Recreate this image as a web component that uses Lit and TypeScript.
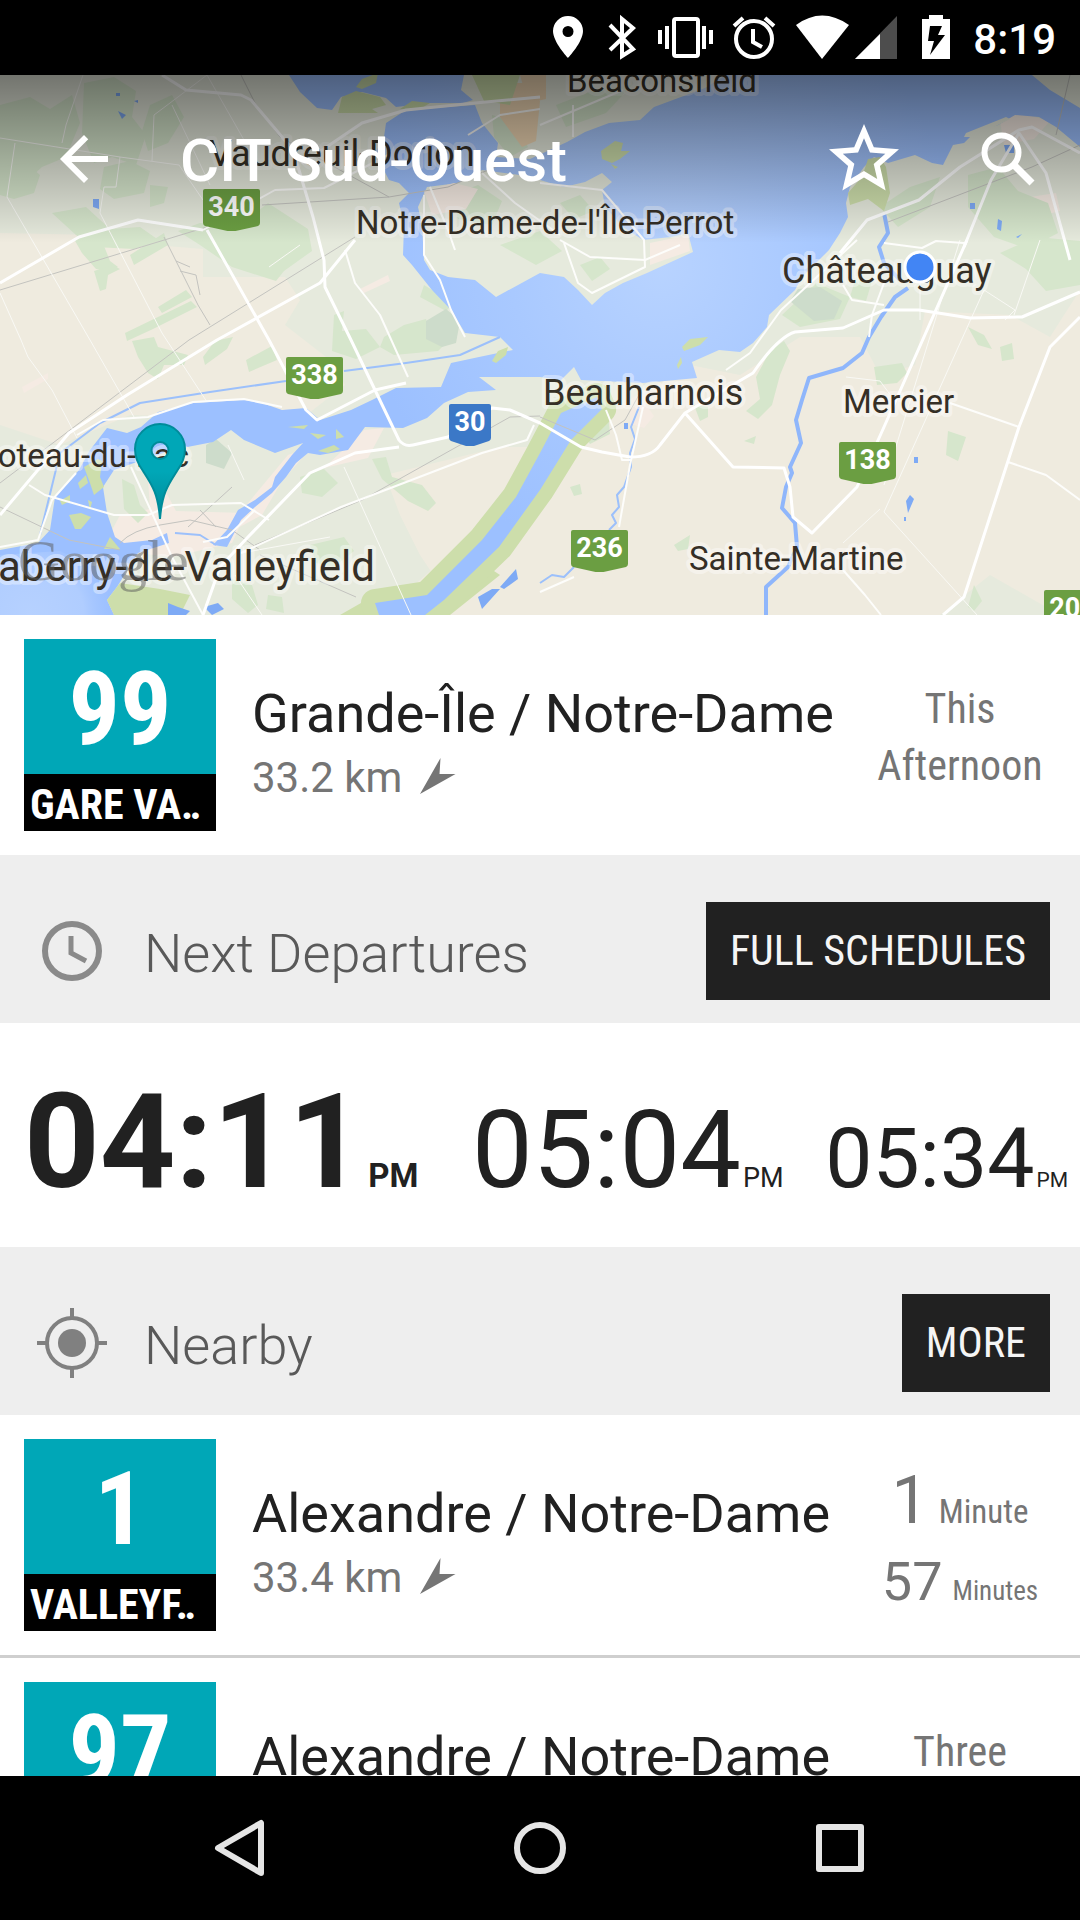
import { LitElement, html, css, svg } from "lit";
import { customElement, property } from "lit/decorators.js";

interface Shield {
  x: number;
  y: number;
  label: string;
  blue?: boolean;
}

interface Place {
  x: number;
  y: number;
  size: number;
  name: string;
  anchor?: string;
}

interface Wait {
  value: string;
  unit: string;
}

interface Stop {
  route: string;
  headsign: string;
  name: string;
  distance: string;
  words?: string[];
  waits?: Wait[];
}

const SHIELDS: Shield[] = [
  { x: 203, y: 114, label: "340" },
  { x: 286, y: 282, label: "338" },
  { x: 449, y: 329, label: "30", blue: true },
  { x: 839, y: 367, label: "138" },
  { x: 571, y: 455, label: "236" },
  { x: 1044, y: 515, label: "201" },
];

const PLACES: Place[] = [
  { x: 567, y: 17, size: 33, name: "Beaconsfield" },
  { x: 209, y: 91, size: 36, name: "Vaudreuil-Dorion" },
  { x: 356, y: 159, size: 33, name: "Notre-Dame-de-l'Île-Perrot" },
  { x: 782, y: 208, size: 36, name: "Châteauguay" },
  { x: 543, y: 330, size: 36, name: "Beauharnois" },
  { x: 843, y: 338, size: 33, name: "Mercier" },
  { x: 689, y: 495, size: 33, name: "Sainte-Martine" },
  { x: 189, y: 392, size: 33, name: "Coteau-du-Lac", anchor: "end" },
  { x: 375, y: 506, size: 42, name: "Salaberry-de-Valleyfield", anchor: "end" },
];

/* Woods, drawn as loose angular patches. */
const WOODS = [
  "M0 30l30-8 20 12 22-14 8 28-14 34-24 10-20 18-22-6z",
  "M84 8l30-6 22 14-4 26 14 18-10 30-24-8-18 6-12-30z",
  "M150 30l22-10 12 22-16 26-20 8-6-20z",
  "M0 92l26-4 14 12-6 18-20 6-14-4z",
  "M52 138l34-6 24 22 30-2 20 14-26 8-40-2-18-12z",
  "M104 92l26-6 20 10-6 22-30 6-14-10zM150 110l18 2-4 16-14 4z",
  "M130 180l34-22 4 12-34 20zM74 164l24-8 12 30 8 6-8 4-14-2-14-16z",
  "M94 196l18-6 8 4-12 6-2 14-6 2z",
  "M178 156l22-8 38 4 30-24 40 26 4 22-28 20-8 10-44-14-32-22z",
  "M158 232l28-17 6 7-30 16zM125 258l66-32 6 6-44 22-26 12zM246 285l26-14 5 14-28 12z",
  "M203 282l12-16 18-4-6 12-22 16zM132 266l22-4 4 10 30 8-4 10-20 0-6 14-10-6-10-16z",
  "M334 240l10-4-2 20 24-2 14 18-24 12-24-8zM384 262l20-12 22-6 4 14 18 8-10 10-44 4-14-8z",
  "M122 404l12 6 6 20 8 8-10 10-14-14zM300 402l24-8 14 14-16 14-20-4z",
  "M372 384l14-2 6 20 30 8 14 18-8 8-20-10-26-22z",
  "M310 470l34-8 10 14-20 16-18-4zM232 504l20 6 6 20-10 8-16-14zM268 520l14 2 2 16-18-4z",
  "M492 40l20 6 16 26-18 10-16-20zM424 210l30 18-8 8-26-14z",
  "M556 30l36-14 40-6-26 28-40 14z",
  "M968 100l30-8 20 24 30 12 10 30-30 16-34-12-26-30z",
  "M1000 178l36-16 44 4v44l-34 6-20-22z",
  "M880 132l30-20 30-10-10 30-32 20z",
  "M782 240l34-32 34 14-10 22-40 8zM856 202l16 4-6 20-16-4z",
  "M874 292l28-4 5 10-10 10-20 2zM770 276l14-10 6 10-10 24-8 30-14 14-12-8 14-12-4-22z",
  "M948 356l18 6-8 24-12-6zM1000 272l12-4 2 16-12 2zM968 252l16 8 8 14-14-4z",
  "M674 470l16-10-2 14-10 2zM584 345l14-12 10 4 2 22-20 10-6-8z",
  "M744 366l12-5-2 8zM570 412l10-3 2 10-8 2zM974 510l8 16-8 10-6-4z",
  "M540 295l16-20 16 6-14 18zM602 178l28-8 6 22-22 10-14-8zM694 330l14 2 0 10-8 4z",
];

const BUILT = [
  "M418 118l30-14 40-6 50 10-20 22-60-2-18 30z",
  "M120 440l30-6 -2-30 8-6 20 38 70 2-14 30-60 14-70-8z",
  "M238 440l50-60 24-8-30 34-20 34-30 16z",
  "M364 355l20-2-16 30-44 10z",
  "M360 214l28-14 2 6-26 12zM22 312l26-14 0 6-24 14z",
  "M1030 122l26-4 4 18-24 6-10-12z",
  "M630 335l14-8 10 14-10 12-14-4z",
  "M1000 46l20-8 30 8-16 18-30 6z",
];

const MEADOWS = [
  "M426 246l20-12 14 12-4 22-14 4-16-8z",
  "M206 370l10-6 16 14-8 16-18-6z",
  "M790 226l8-12 22-2 22 14-8 18-20 2z",
];

const FIELDS = [
  "M500 8l24 0 16 18-4 40-14 6-22-30z",
  "M520 0h26l0 24-18 4z",
];

/* Main rivers and lakes. */
const WATER = [
  "M289 0L300 17 317 33 332 35 341 22 362 17 386 23 396 32 430 28 463 28 473 25 461 15 464 0z",
  "M406 35L475 30 482 48 498 68 496 82 530 84 567 67 585 57 609 48 640 45 654 32 681 22 705 13 726 0H1032L1050 15 1080 33V72L1056 52 1039 42 1015 40 998 50 974 58 964 68 953 70 943 90 932 88 915 80 888 88 874 82 864 92 850 112 846 128 848 142 840 158 829 175 802 202 795 215 769 240 767 252 753 268 740 277 719 275 692 287 697 303 643 308 581 305 574 292 561 305 540 302 530 302 479 302 496 315 468 317 444 328 427 343 403 353 365 352 348 375 320 380 308 378 296 388 286 402 272 418 255 432 241 445 227 472 213 470 227 455 238 435 255 425 272 412 275 402 292 380 303 368 275 378 244 365 231 355 213 367 172 375 134 388 114 395 103 412 107 438 115 462 124 468 152 465 167 458 169 468 138 478 117 512 107 525 114 540H0V475L38 468 50 455 55 422 79 395 90 375 107 353 127 358 141 352 158 337 193 328 244 325 262 328 282 335 306 333 320 345 351 335 372 325 396 313 441 312 451 288 479 282 513 275 500 262 465 258 451 235 432 215 412 190 403 180 404 150 399 128 409 118 399 108 389 105 375 78 384 62 386 48z",
  "M561 338L597 322 602 334 571 365 540 415 499 472 444 525 425 540H379L375 528 427 520 482 465 516 422 540 378z",
];

const ISLANDS = [
  "M418 132L427 112 458 108 482 95 520 100 540 105 564 112 585 107 602 98 612 107 602 115 605 132 623 152 643 165 671 162 688 158 693 177 671 187 647 198 623 208 605 218 592 230 578 215 564 202 540 198 496 222 475 205 448 202 430 195 424 185 422 150z",
];

const SMALL_ISLANDS = [
  "M601 76l14-10 8 2-2 8 9 0-10 8-8 4-10-4z",
  "M611 89l7 3-3 2z",
  "M356 12l6-8 16-6-2 10-14 6z",
  "M342 22l14-6 24 6 6 8-14 4 6 4-40 0z",
  "M400 34l12-8 18 2-10 6z",
  "M682 272l8-8 18-2-8 8-16 6z",
  "M677 290l4-8 1 6-4 6z",
  "M288 352l20-2-4 4zM310 358l16 2-8 4zM336 354l8 8-8 2zM318 376l16-6 6 4-12 4z",
  "M78 408l8-8 2 8-8 6zM69 440l12-2 10 4-10 12-6 0zM84 392l14-8 4 2-2 16 4 10-10 8-4-12z",
  "M60 426l10-6 0 6-8 4zM88 425l4 2-2 8zM104 474l6-12 10 12z",
  "M492 286l6-10 10-4-2 8-10 8z",
];

const MAIN_ROADS = [
  "M162 0L186 15 241 20 251 25 293 75 313 142 324 185 325 212 351 265 399 365Q404 372 413 370L448 362 492 333 510 335 540 348 581 372 602 377 630 382Q652 382 660 370L685 338 753 298 Q778 262 795 257L843 253 884 235 919 235 970 243 1022 242 1080 217",
  "M540 22L475 28 406 35 362 48 303 88 293 78M355 165L320 208 217 265 127 320 69 358 0 440",
  "M207 155L269 265 306 335 317 345 375 315 406 308M203 155L138 145 79 162 0 208",
  "M203 540L220 492 248 462 310 398 355 378 399 372",
  "M840 178L867 145 919 125 960 92 1019 55 1032 52 1080 78",
  "M964 172L991 105 1019 58 1046 98 1070 185",
  "M685 338L733 392 784 393 790 412 793 442 812 458 857 412 884 352 967 165",
  "M1080 242L1050 272 1019 352 964 522 943 540",
];

const SIDE_ROADS = [
  "M29 410L45 420 114 440 148 440 172 430 241 428 269 445",
  "M0 472L38 465 52 425 76 398M77 360L103 345 148 342 193 327 244 324 282 332",
  "M203 155L275 115 324 113 334 108 365 92 388 80",
  "M203 467L227 462 255 435M131 392L172 482 203 540",
  "M241 478L341 432 482 378 527 365 534 350",
  "M424 120L424 180 440 205 451 235 465 262M564 168L578 208 592 218 645 192 644 165 602 115 540 108",
  "M560 165L590 182 645 185 680 170M430 112L448 155 455 175M482 98L515 128 560 160",
  "M857 165L781 235 750 278 726 295M884 208L872 240 869 262",
  "M843 495L865 520 881 540M1019 352L950 328M1008 387L1046 400 1080 425",
  "M643 332L630 390 619 452M574 502L540 517M606 335L616 360 622 385 632 385",
  "M884 168L922 173 936 166 964 168M843 210L852 225 884 230",
  "M540 50L623 15M573 30V62M468 60L500 40 540 34",
  "M345 175L355 208 380 240 408 302",
];

const THIN_ROADS = [
  "M83 0L66 50 62 68M15 68L7 122 90 265 134 342M0 63L120 82 179 90 203 125M0 218L21 265 28 282 52 315 77 363",
  "M152 86L154 40 170 28 207 0M120 82L116 112H104L100 138 162 258 207 327M172 30L210 110M207 0L248 72",
  "M344 392L411 540M269 192L300 170M884 437L977 540M884 437L984 215M880 434L843 468",
  "M1064 540L1080 520M920 245V200M960 165L884 410M1040 165L1014 240M984 215L1015 235 1005 245",
  "M235 500L262 540M241 478L330 462M228 370L244 405M846 302L880 306 892 322",
];

const RAILS = [
  "M0 215L207 152M241 0L255 28 280 62 389 122 262 130M389 122L448 112 500 90",
  "M0 408L189 265 355 162M0 432L69 465 120 475M120 468Q132 455 160 450L190 445 232 455 260 475M255 470L362 425 510 342 540 341",
  "M188 452L232 412M200 435L216 452M164 162L178 190 198 230 210 250M180 196L196 200 200 220M176 186L190 192",
  "M540 342L595 365 625 345 640 318M888 147L1032 92 1080 70M1056 60L1070 0M260 480L356 522",
];

const CREEKS = [
  "M884 138L888 158 879 172 884 188 900 205",
  "M908 213L895 222 881 242 869 262 862 278 843 293 809 303 802 325 796 345 801 368 790 392 792 398 786 412 782 433 795 448 797 472 788 492 766 512 766 540",
];

const BROOKS = [
  "M639 332L631 352 635 364 630 378 631 392 624 412 617 420 619 432 612 440 616 448 609 455M574 492L564 502 552 500 540 508",
  "M344 296L406 288 460 280 500 262M286 306L210 317 140 328 100 348 60 378 40 460M175 458L200 460 216 470",
];

const PONDS = [
  "M93 124h6v10l-6-2zM118 36l8 4-4 4zM134 26l4-1v3zM116 18h4v3h-4z",
  "M906 426l4-6 4 4-6 14zM904 442h2v4h-2zM970 128h5v6h-5zM998 144l4 2-1 10-4-2zM1016 162l6-3-4 4z",
  "M914 382h4v6h-4zM624 348h4v6h-4zM500 512l16-18 2 10-14 10zM478 522l14-8 8 0-18 20zM168 528l10 4 12 4-4 4h-18z",
  "M204 532l14-4 6 6-12 6zM1004 70h10v8h-8z",
];

@customElement("region-map")
class RegionMap extends LitElement {
  static styles = css`
    :host {
      display: block;
    }
    .map {
      display: block;
      width: 100%;
      height: 540px;
      font-family: Roboto, "Liberation Sans", sans-serif;
    }
    .woods { fill: #d6e6cc; }
    .built { fill: #f5ebe3; }
    .meadow { fill: #cddccb; }
    .field { fill: #f0d7b4; }
    .water { fill: url(#lake); }
    .bay { fill: url(#bay); }
    .park { fill: #cddeab; }
    .land { fill: #e6eadd; }
    .bank { fill: none; stroke: #cddeab; stroke-width: 28; stroke-linejoin: round; }
    .main { fill: none; stroke: #ffffff; stroke-width: 3; stroke-linejoin: round; }
    .side { fill: none; stroke: #fdfdfb; stroke-width: 2; stroke-linejoin: round; }
    .thin { fill: none; stroke: #f9f9f5; stroke-width: 1; }
    .rail { fill: none; stroke: #c3c3bf; stroke-width: 1; }
    .creek { fill: none; stroke: #8fb6fb; stroke-width: 4; stroke-linejoin: round; }
    .brook { fill: none; stroke: #9cc0fb; stroke-width: 2; stroke-linejoin: round; }
    .pond { fill: #7eaaf5; }
    .place {
      fill: #352f26;
      stroke: rgba(255, 255, 255, 0.4);
      stroke-width: 8px;
      stroke-linejoin: round;
      paint-order: stroke;
    }
    .shield { fill: #6b9e42; }
    .shield-blue { fill: #3b78c7; }
    .shield-text { fill: #ffffff; font-size: 27px; font-weight: 700; text-anchor: middle; }
    .brand {
      fill: rgba(90, 90, 90, 0.5);
      font-family: "Liberation Serif", serif;
      font-size: 58px;
    }
    .pin { fill: url(#teal); stroke: #008c9a; stroke-width: 2; }
    .here { fill: #4285f4; stroke: #ffffff; stroke-width: 3; }
  `;

  render() {
    return html`
      <svg class="map" viewBox="0 0 1080 540" preserveAspectRatio="xMidYMid slice" role="img" aria-label="Map">
        <defs>
          <radialGradient id="lake" gradientUnits="userSpaceOnUse" cx="660" cy="190" r="300">
            <stop offset="0" stop-color="#b8d3ff" />
            <stop offset="0.5" stop-color="#a9c9ff" />
            <stop offset="1" stop-color="#9cc0ff" />
          </radialGradient>
          <radialGradient id="bay" gradientUnits="userSpaceOnUse" cx="30" cy="540" r="90">
            <stop offset="0" stop-color="#b6d1ff" />
            <stop offset="0.6" stop-color="#b0cdff" />
            <stop offset="1" stop-color="#9cc0ff" stop-opacity="0" />
          </radialGradient>
          <linearGradient id="teal" x1="0" y1="0" x2="0" y2="1">
            <stop offset="0.5" stop-color="#00a7b7" />
            <stop offset="1" stop-color="#008796" />
          </linearGradient>
        </defs>
        <rect width="1080" height="540" fill="#efebdf" />
        <path class="land" d="M0 0H1080V215L1050 262 1010 240 925 236 915 290 880 300 860 262 800 262 740 300 690 290 620 330 540 400 380 540H0V350L60 370 130 340 300 345 345 310 330 285 285 250 300 225 285 202H203V174L130 168 100 160 0 158z" />
        <path fill="#efebdf" d="M385 400L500 372 530 372 516 422 440 510 420 480 400 440zM500 480L570 380 610 390 600 540H440z" />
        <path class="land" d="M940 540L990 500 1060 540z" />
        ${BUILT.map((d) => svg`<path class="built" d=${d} />`)}
        ${WOODS.map((d) => svg`<path class="woods" d=${d} />`)}
        ${MEADOWS.map((d) => svg`<path class="meadow" d=${d} />`)}
        ${FIELDS.map((d) => svg`<path class="field" d=${d} />`)}
        <path class="park" d="M340 540L375 520 440 505 470 480 500 500 450 540zM472 0H520L510 30 484 26z" />
        <path class="bank" d=${WATER[2]} />
        ${WATER.map((d) => svg`<path class="water" d=${d} />`)}
        <path class="bay" d="M0 480L60 476 110 500 107 525 114 540H0z" />
        <path class="park" d="M107 525L120 508 160 514 190 520 180 540H114z" />
        ${ISLANDS.map((d) => svg`<path class="land" d=${d} />`)}
        <path class="woods" d="M452 120l26-10 24 16-10 24-34-6zM500 170l40-14 22 20-26 14zM580 190l20-8 10 12-18 12zM560 128l20-8 14 16-20 8z" />
        <path class="built" d="M650 168l38-8 2 16-40 14zM424 116l30-8 24 6-12 20-34 6z" />
        ${SMALL_ISLANDS.map((d) => svg`<path class="park" d=${d} />`)}
        <path class="park" d="M848 118L862 102 868 84 880 82 886 92 890 118 884 136 868 124 850 130z" />
        <path class="land" d="M966 58l40-16 4 2-36 18-10 0z" />
        ${BROOKS.map((d) => svg`<path class="brook" d=${d} />`)}
        ${CREEKS.map((d) => svg`<path class="creek" d=${d} />`)}
        ${PONDS.map((d) => svg`<path class="pond" d=${d} />`)}
        ${RAILS.map((d) => svg`<path class="rail" d=${d} />`)}
        ${THIN_ROADS.map((d) => svg`<path class="thin" d=${d} />`)}
        ${SIDE_ROADS.map((d) => svg`<path class="side" d=${d} />`)}
        ${MAIN_ROADS.map((d) => svg`<path class="main" d=${d} />`)}
        ${PLACES.map(
          (p) => svg`<text class="place" x=${p.x} y=${p.y} font-size=${p.size} text-anchor=${p.anchor ?? "start"}>${p.name}</text>`
        )}
        ${SHIELDS.map((s) => {
          const w = s.blue ? 42 : 57;
          return svg`<g transform="translate(${s.x} ${s.y})">
            <path class=${s.blue ? "shield-blue" : "shield"} d="M2 0H${w - 2}Q${w} 0 ${w} 2V34Q${w} 36 ${w - 2} 37L${w / 2 + 4} 42H${w / 2 - 4}L2 37Q0 36 0 34V2Q0 0 2 0z" />
            <text class="shield-text" x=${w / 2} y="27">${s.label}</text>
          </g>`;
        })}
        <text class="brand" x="18" y="505">Google</text>
        <path class="pin" fill-rule="evenodd" d="M160 444C158 418 152 410 143 396Q135 385 135 374A25 25 0 0 1 185 374Q185 385 177 396C168 410 162 418 160 444zM160 367A8 8 0 0 0 160 384A8 8 0 0 0 160 367z" />
        <circle class="here" cx="920" cy="192" r="15" />
      </svg>
    `;
  }
}

@customElement("stop-row")
class StopRow extends LitElement {
  @property({ attribute: false }) stop!: Stop;

  static styles = css`
    :host {
      display: block;
    }
    .row {
      display: grid;
      grid-template-columns: 192px 1fr 240px;
      column-gap: 36px;
      padding: 24px 0 24px 24px;
      min-height: 192px;
      background: #ffffff;
    }
    .badge {
      display: flex;
      flex-direction: column;
      font-family: "Roboto Condensed", Roboto, "Liberation Sans", sans-serif;
      font-weight: 700;
      color: #ffffff;
    }
    .route {
      height: 135px;
      line-height: 140px;
      background: #00a7b7;
      font-size: 102px;
      text-align: center;
    }
    .headsign {
      height: 57px;
      line-height: 62px;
      padding: 0 6px;
      background: #000000;
      font-size: 42px;
      white-space: nowrap;
      overflow: hidden;
    }
    .info {
      padding-top: 39px;
      min-width: 0;
    }
    .name {
      margin: 0;
      font-size: 54px;
      font-weight: 400;
      line-height: 72px;
      color: #212121;
      white-space: nowrap;
    }
    .distance {
      display: flex;
      align-items: center;
      gap: 18px;
      font-size: 42px;
      line-height: 56px;
      color: #757575;
    }
    .arrow {
      width: 36px;
      height: 36px;
      margin-bottom: 4px;
      fill: #757575;
    }
    .when {
      display: flex;
      flex-direction: column;
      justify-content: center;
      align-items: center;
      font-family: "Roboto Condensed", Roboto, "Liberation Sans", sans-serif;
      font-size: 42px;
      line-height: 57px;
      color: #757575;
      padding-top: 4px;
    }
    .wait {
      display: flex;
      align-items: baseline;
      font-family: Roboto, "Liberation Sans", sans-serif;
      gap: 10px;
      line-height: 80px;
    }
    .value {
      font-size: 54px;
    }
    .unit {
      font-family: "Roboto Condensed", Roboto, "Liberation Sans", sans-serif;
      font-size: 27px;
    }
    .wait:first-child {
      line-height: 60px;
    }
    .wait:first-child .value {
      font-size: 66px;
    }
    .wait:first-child .unit {
      font-size: 33px;
    }
    .timed {
      padding-top: 32px;
    }
  `;

  render() {
    const s = this.stop;
    return html`
      <article class="row">
        <div class="badge">
          <span class="route">${s.route}</span>
          <span class="headsign">${s.headsign}</span>
        </div>
        <div class="info">
          <h3 class="name">${s.name}</h3>
          <div class="distance">
            <span>${s.distance}</span>
            <svg class="arrow" viewBox="0 0 36 36" aria-hidden="true"><path d="M20.500 0L19.500 16 35.500 16 0 36z" /></svg>
          </div>
        </div>
        <div class="when ${s.waits ? "timed" : ""}">
          ${s.words?.map((w) => html`<span>${w}</span>`)}
          ${s.waits?.map(
            (w) => html`<span class="wait"><span class="value">${w.value}</span><span class="unit">${w.unit}</span></span>`
          )}
        </div>
      </article>
    `;
  }
}

const SELECTED: Stop = {
  route: "99",
  headsign: "GARE VA‥",
  name: "Grande-Île / Notre-Dame",
  distance: "33.2 km",
  words: ["This", "Afternoon"],
};

const NEARBY: Stop[] = [
  {
    route: "1",
    headsign: "VALLEYF‥",
    name: "Alexandre / Notre-Dame",
    distance: "33.4 km",
    waits: [
      { value: "1", unit: "Minute" },
      { value: "57", unit: "Minutes" },
    ],
  },
  {
    route: "97",
    headsign: "VALLEYF‥",
    name: "Alexandre / Notre-Dame",
    distance: "33.4 km",
    words: ["Three", "Hours"],
  },
];

@customElement("app-root")
class AppRoot extends LitElement {
  static styles = css`
    :host {
      display: flex;
      flex-direction: column;
      height: 100vh;
      overflow: hidden;
      background: #ffffff;
      font-family: Roboto, "Liberation Sans", sans-serif;
      color: #212121;
    }
    button {
      border: 0;
      margin: 0;
      padding: 0;
      background: none;
      font: inherit;
      color: inherit;
      cursor: pointer;
    }
    svg {
      display: block;
    }
    .status {
      flex: none;
      display: flex;
      justify-content: flex-end;
      align-items: center;
      height: 75px;
      padding-right: 24px;
      background: #000000;
      color: #ffffff;
      font-size: 42px;
      font-weight: 500;
    }
    .status svg {
      height: 75px;
      fill: #ffffff;
    }
    .status time {
      padding-top: 3px;
      margin-left: 12px;
    }
    .w51 { width: 51px; }
    .w55 { width: 55px; }
    .w57 { width: 57px; }
    .w64 { width: 64px; }
    .w66 { width: 66px; }
    .w75 { width: 75px; }
    .w52 { width: 52px; }
    .hero {
      flex: none;
      position: relative;
    }
    .toolbar {
      position: absolute;
      inset: 0 0 auto 0;
      display: flex;
      align-items: center;
      height: 168px;
      padding-left: 12px;
      background: linear-gradient(rgba(0, 0, 0, 0.5), rgba(0, 0, 0, 0));
      color: #ffffff;
    }
    .tool {
      display: grid;
      place-items: center;
      width: 144px;
      height: 144px;
    }
    .tool svg {
      width: 72px;
      height: 72px;
      fill: #ffffff;
    }
    .tool .star {
      width: 84px;
      height: 84px;
    }
    .title {
      flex: 1;
      margin: 0;
      padding: 4px 0 0 24px;
      font-size: 60px;
      font-weight: 500;
      line-height: 72px;
      white-space: nowrap;
    }
    .content {
      flex: 1;
      min-height: 0;
      overflow: hidden;
    }
    .section {
      display: flex;
      align-items: center;
      gap: 36px;
      min-height: 144px;
      padding: 24px 30px 0 36px;
      background: #eeeeee;
    }
    .section svg {
      flex: none;
      width: 72px;
      height: 72px;
    }
    .heading {
      flex: 1;
      margin: 0;
      padding-top: 6px;
      font-size: 54px;
      font-weight: 300;
      line-height: 64px;
      color: #595959;
    }
    .section .action {
      height: 98px;
      padding: 0 24px 2px;
      background: #212121;
      color: #f5f5f5;
      font-family: "Roboto Condensed", Roboto, "Liberation Sans", sans-serif;
      font-size: 42px;
      white-space: nowrap;
    }
    .times {
      display: flex;
      align-items: baseline;
      justify-content: space-between;
      height: 224px;
      padding: 0 12px 0 24px;
      line-height: 238px;
      white-space: nowrap;
    }
    .first { font-size: 132px; font-weight: 700; padding-right: 12px; }
    .second { font-size: 108px; }
    .third { font-size: 84px; }
    .pm { margin-left: 2px; }
    .first .pm { font-size: 33px; margin-left: 4px; }
    .second .pm { font-size: 27px; }
    .third .pm { font-size: 21px; }
    .divider {
      height: 3px;
      background: #cfcfcf;
    }
    .nav {
      flex: none;
      display: flex;
      justify-content: center;
      height: 144px;
      background: #000000;
    }
    .key {
      flex: 0 1 300px;
      display: grid;
      place-items: center;
    }
    .key svg {
      width: 60px;
      height: 60px;
      fill: none;
      stroke: #e5e5e5;
      stroke-width: 6;
      stroke-linejoin: round;
    }
  `;

  private statusBar() {
    return html`
      <header class="status">
        <svg class="w55" viewBox="0 0 55 75"><path fill-rule="evenodd" d="M27 16a15 15 0 0 0-15 15C12 42 27 58 27 58S42 42 42 31A15 15 0 0 0 27 16zM27 26a5 5 0 1 1 0 11 5 5 0 0 1 0-11z" /></svg>
        <svg class="w51" viewBox="0 0 51 75"><path d="M14 25L37 49 26 56V19L37 28 14 50" fill="none" stroke="#ffffff" stroke-width="4" /></svg>
        <svg class="w75" viewBox="0 0 75 75"><rect x="27" y="19" width="24" height="37" rx="2" fill="none" stroke="#ffffff" stroke-width="4" /><path d="M18 26h4v23h-4zM11 30h4v14h-4zM55 26h4v23h-4zM62 30h4v14h-4z" /></svg>
        <svg class="w64" viewBox="0 0 64 75"><circle cx="32" cy="39" r="18" fill="none" stroke="#ffffff" stroke-width="4" /><path d="M31 29v13l9 5M12 26l9-8M52 26l-9-8" fill="none" stroke="#ffffff" stroke-width="4" /></svg>
        <svg class="w66" viewBox="0 0 66 75"><path d="M10 25Q36 6 63 25L36 59z" /></svg>
        <svg class="w57" viewBox="0 0 57 75"><path d="M45 16V59H3z" fill="#4d4d4d" /><path d="M28 34V59H3z" /></svg>
        <svg class="w52" viewBox="0 0 52 75"><path fill-rule="evenodd" d="M20 15h14v4h7v40H13V19h7zM21 26L19 41h6l-4 14 15-20h-7l4-9z" /></svg>
        <time>8:19</time>
      </header>
    `;
  }

  private toolbar() {
    return html`
      <div class="toolbar">
        <button class="tool" aria-label="Back">
          <svg viewBox="0 0 24 24"><path d="M20 11H7.830l5.590-5.590L12 4l-8 8 8 8 1.410-1.410L7.830 13H20v-2z" /></svg>
        </button>
        <h1 class="title">CIT Sud-Ouest</h1>
        <button class="tool" aria-label="Add to favourites">
          <svg class="star" viewBox="0 0 24 24"><path d="M22 9.240l-7.190-.620L12 2 9.190 8.630 2 9.240l5.460 4.730L5.820 21 12 17.270 18.180 21l-1.630-7.030L22 9.240zM12 15.400l-3.760 2.270 1-4.280-3.320-2.880 4.380-.380L12 6.100l1.710 4.040 4.380.380-3.320 2.880 1 4.280L12 15.400z" /></svg>
        </button>
        <button class="tool" aria-label="Search">
          <svg viewBox="0 0 72 72"><circle cx="29.500" cy="29.500" r="17" fill="none" stroke="#ffffff" stroke-width="6" /><path d="M42 42L60 60" stroke="#ffffff" stroke-width="7" /></svg>
        </button>
      </div>
    `;
  }

  render() {
    return html`
      ${this.statusBar()}
      <div class="hero">
        <region-map></region-map>
        ${this.toolbar()}
      </div>
      <main class="content">
        <stop-row .stop=${SELECTED}></stop-row>
        <section>
          <div class="section">
            <svg viewBox="0 0 72 72" fill="none" stroke="#8a8a8a" aria-hidden="true"><circle cx="36" cy="36" r="27" stroke-width="6" /><path d="M35 21V38L50 46" stroke-width="5" /></svg>
            <h2 class="heading">Next Departures</h2>
            <button class="action">FULL SCHEDULES</button>
          </div>
          <div class="times">
            <span class="first">04:11<span class="pm">PM</span></span>
            <span class="second">05:04<span class="pm">PM</span></span>
            <span class="third">05:34<span class="pm">PM</span></span>
          </div>
        </section>
        <section>
          <div class="section">
            <svg viewBox="0 0 72 72" fill="none" stroke="#808080" aria-hidden="true"><circle cx="36" cy="36" r="25" stroke-width="4" /><circle cx="36" cy="36" r="14" fill="#808080" stroke="none" /><path d="M36 1V10M36 62V71M1 36H10M62 36H71" stroke-width="4" /></svg>
            <h2 class="heading">Nearby</h2>
            <button class="action">MORE</button>
          </div>
          ${NEARBY.map(
            (stop, i) => html`${i > 0 ? html`<div class="divider"></div>` : ""}<stop-row .stop=${stop}></stop-row>`
          )}
        </section>
      </main>
      <nav class="nav">
        <button class="key" aria-label="Back"><svg viewBox="0 0 60 60"><path d="M51 5V55L8 30z" /></svg></button>
        <button class="key" aria-label="Home"><svg viewBox="0 0 60 60"><circle cx="30" cy="30" r="23" /></svg></button>
        <button class="key" aria-label="Recent apps"><svg viewBox="0 0 60 60"><rect x="9" y="9" width="42" height="42" /></svg></button>
      </nav>
    `;
  }
}
